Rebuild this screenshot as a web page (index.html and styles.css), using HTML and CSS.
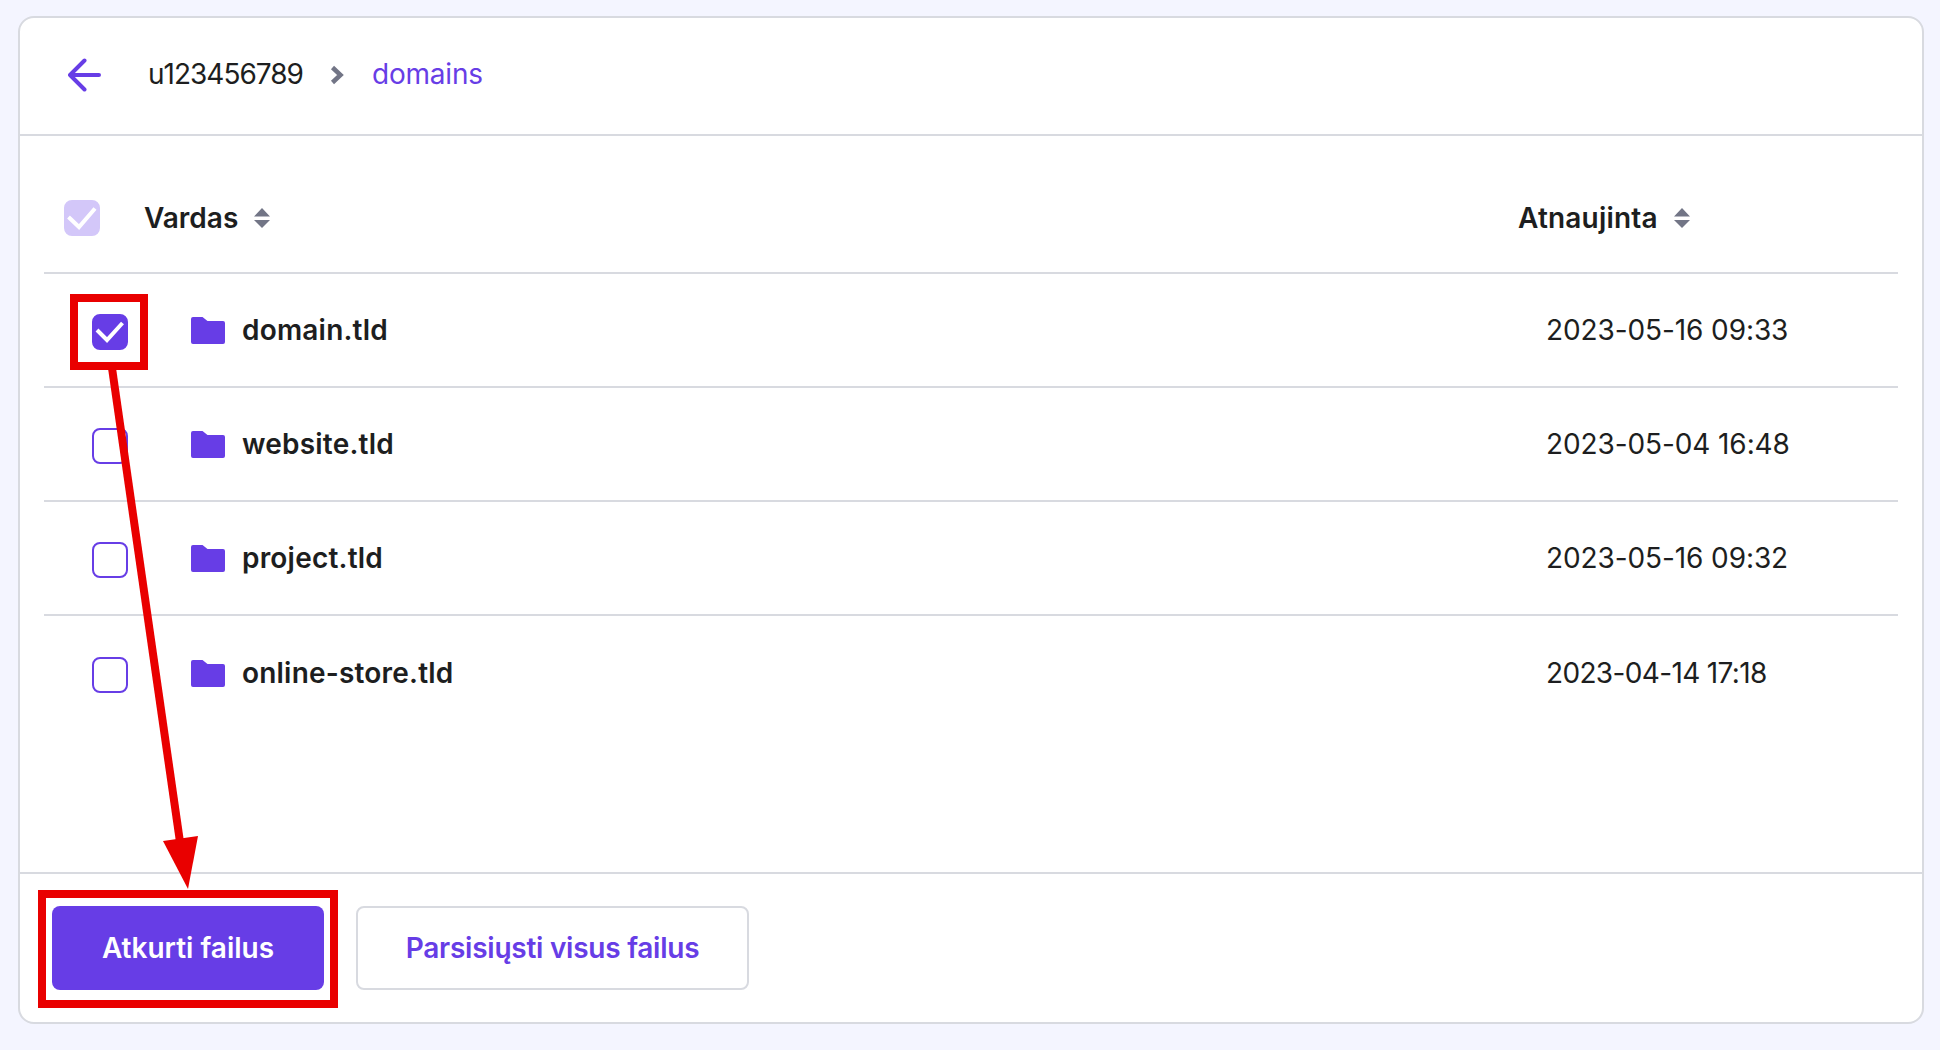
FILE: index.html
```html
<!DOCTYPE html>
<html lang="lt">
<head>
<meta charset="utf-8">
<title>Failai</title>
<link rel="stylesheet" href="styles.css">
</head>
<body>
<main class="card">
  <header class="crumbs">
    <svg class="back" viewBox="0 0 34 34" width="34" height="34"><path d="M31 17H2M16.500 2.500L2 17L16.500 31.500"/></svg>
    <span class="crumb crumb-user">u123456789</span>
    <svg class="chev" viewBox="0 0 14 20" width="14" height="20"><path d="M2.500 2.500L10.500 10L2.500 17.500"/></svg>
    <a class="crumb crumb-link">domains</a>
  </header>
  <section class="table">
    <div class="thead">
      <span class="box box-dim"><svg viewBox="0 0 36 36"><path d="M4.500 17L15 27L31 8.500"/></svg></span>
      <span class="th th-name">Vardas<svg class="sort" viewBox="0 0 16 20" width="16" height="20"><path d="M8 0L16 8.500H0zM8 20L0 12H16z"/></svg></span>
      <span class="th th-date">Atnaujinta<svg class="sort" viewBox="0 0 16 20" width="16" height="20"><path d="M8 0L16 8.500H0zM8 20L0 12H16z"/></svg></span>
    </div>
    <div class="row">
      <span class="box box-on"><svg viewBox="0 0 36 36"><path d="M5 16L15 26L30.500 9"/></svg></span>
      <svg class="folder" viewBox="0 0 34 27" width="34" height="27"><path d="M2 0H11.500L16.500 4H32a2 2 0 0 1 2 2V25a2 2 0 0 1-2 2H2a2 2 0 0 1-2-2V2a2 2 0 0 1 2-2z"/></svg>
      <span class="name">domain.tld</span>
      <span class="date">2023-05-16 09:33</span>
    </div>
    <div class="row">
      <span class="box"></span>
      <svg class="folder" viewBox="0 0 34 27" width="34" height="27"><path d="M2 0H11.500L16.500 4H32a2 2 0 0 1 2 2V25a2 2 0 0 1-2 2H2a2 2 0 0 1-2-2V2a2 2 0 0 1 2-2z"/></svg>
      <span class="name">website.tld</span>
      <span class="date">2023-05-04 16:48</span>
    </div>
    <div class="row">
      <span class="box"></span>
      <svg class="folder" viewBox="0 0 34 27" width="34" height="27"><path d="M2 0H11.500L16.500 4H32a2 2 0 0 1 2 2V25a2 2 0 0 1-2 2H2a2 2 0 0 1-2-2V2a2 2 0 0 1 2-2z"/></svg>
      <span class="name">project.tld</span>
      <span class="date">2023-05-16 09:32</span>
    </div>
    <div class="row row-last">
      <span class="box"></span>
      <svg class="folder" viewBox="0 0 34 27" width="34" height="27"><path d="M2 0H11.500L16.500 4H32a2 2 0 0 1 2 2V25a2 2 0 0 1-2 2H2a2 2 0 0 1-2-2V2a2 2 0 0 1 2-2z"/></svg>
      <span class="name">online-store.tld</span>
      <span class="date date-tight">2023-04-14 17:18</span>
    </div>
  </section>
  <footer class="actions">
    <button class="btn btn-primary">Atkurti failus</button>
    <button class="btn btn-outline">Parsisiųsti visus failus</button>
  </footer>
</main>
<svg class="overlay" viewBox="0 0 1940 1050" width="1940" height="1050">
  <rect class="mark" x="74" y="298" width="70" height="68"/>
  <rect class="mark" x="42" y="894" width="292" height="110"/>
  <path class="shaft" d="M112 368L180 842"/>
  <path class="head" d="M163 841L198 836L188 889z"/>
</svg>
</body>
</html>
```
FILE: styles.css
```css
* { box-sizing: border-box; }
html, body { margin: 0; height: 100%; }
body {
  background: #f4f5ff;
  font-family: "Inter", "Liberation Sans", sans-serif;
  color: #1d1e20;
  padding: 16px 16px 16px 18px;
  overflow: hidden;
  position: relative;
}
.card {
  width: 1906px;
  height: 1008px;
  background: #fff;
  border: 2px solid #d8dae0;
  border-radius: 16px;
  display: flex;
  flex-direction: column;
}
.crumbs {
  height: 118px;
  border-bottom: 2px solid #d8dae0;
  display: flex;
  align-items: center;
  padding-left: 48px;
  flex: none;
}
.back { fill: none; stroke: #673de6; stroke-width: 4; margin: 0 46px 2px 0; }
.back path { stroke-linecap: round; stroke-linejoin: round; }
.crumb { font-size: 28px; letter-spacing: -0.2px; margin-bottom: 5px; }
.crumb-user { letter-spacing: -1px; }
.crumb-link { color: #673de6; }
.chev { fill: none; stroke: #727586; stroke-width: 4.500; margin: 0 28px 2px 27px; }
.table {
  flex: 1;
  margin: 0 24px;
}
.thead {
  height: 138px;
  padding: 28px 0 0 20px;
  border-bottom: 2px solid #d8dae0;
  display: flex;
  align-items: center;
}
.box {
  width: 36px;
  height: 36px;
  border-radius: 8px;
  border: 2px solid #673de6;
  flex: none;
  display: block;
}
.box svg { display: block; width: 36px; height: 36px; margin: -2px; fill: none; stroke: #fff; stroke-width: 4; }
.box-on { background: #673de6; }
.box-dim { background: #d3c7f9; border-color: #d3c7f9; }
.th { font-size: 28px; font-weight: 600; display: flex; align-items: center; }
.th-name { margin-left: 44px; flex: 1; }
.th-date { width: 380px; letter-spacing: 0.2px; }
.sort { fill: #727586; margin-left: 16px; }
.row {
  height: 114px;
  padding: 4px 0 0 48px;
  border-bottom: 2px solid #d8dae0;
  display: flex;
  align-items: center;
}
.row-last { border-bottom: 0; }
.folder { fill: #673de6; margin: 0 0 4px 63px; flex: none; }
.name { margin: 0 0 5px 17px; flex: 1; font-size: 28px; font-weight: 600; letter-spacing: 0.2px; }
.date { width: 352px; font-size: 28px; letter-spacing: -0.1px; margin-bottom: 5px; }
.date-tight { letter-spacing: -0.65px; }
.actions {
  height: 150px;
  border-top: 2px solid #d8dae0;
  flex: none;
  padding: 32px 0 0 32px;
  display: flex;
  gap: 32px;
  align-items: flex-start;
}
.btn {
  height: 84px;
  border-radius: 8px;
  font: 600 28px "Inter", "Liberation Sans", sans-serif;
  padding: 0;
}
.btn-primary { width: 272px; background: #673de6; border: 0; color: #fff; }
.btn-outline { width: 393px; background: #fff; border: 2px solid #d8dae0; color: #673de6; letter-spacing: -0.25px; }
.overlay { position: absolute; left: 0; top: 0; pointer-events: none; }
.mark { fill: none; stroke: #e90000; stroke-width: 8; }
.shaft { stroke: #e90000; stroke-width: 8; fill: none; }
.head { fill: #e90000; }
```
